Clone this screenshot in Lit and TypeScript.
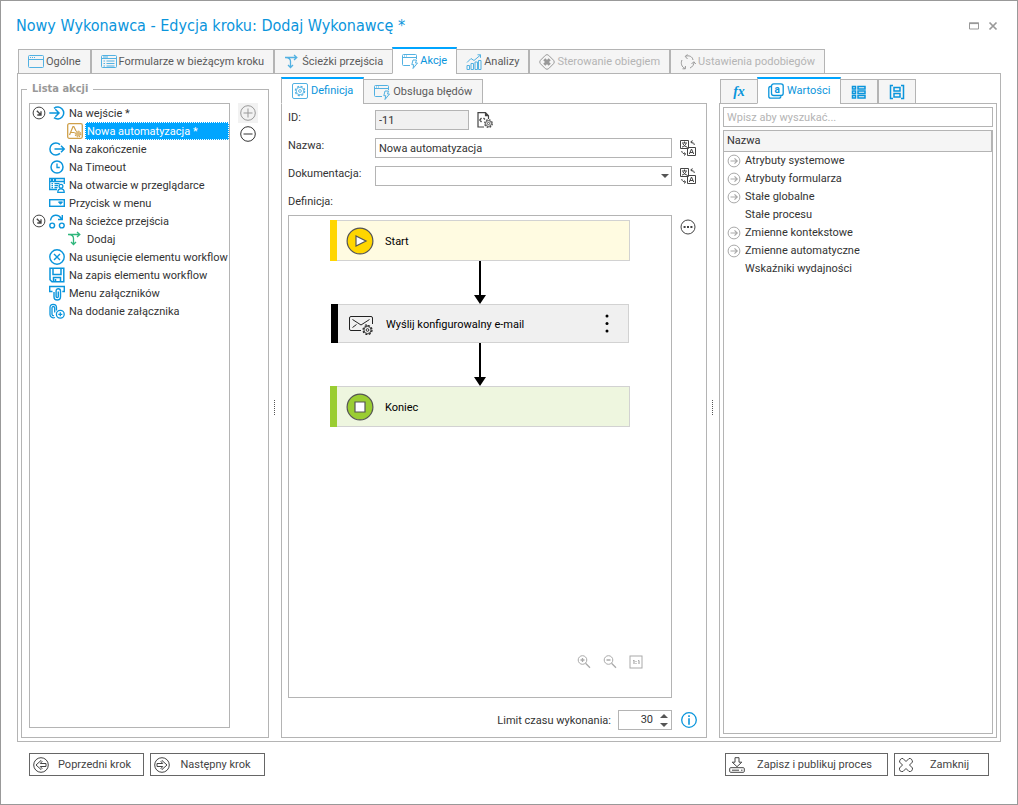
import { LitElement, html, css, svg, nothing, TemplateResult } from "lit";
import { customElement, state } from "lit/decorators.js";
import { classMap } from "lit/directives/class-map.js";

/* ---------- icon set (16 x 16 grid, stroke = currentColor) ---------- */

const gear = (cx: number, cy: number, r: number) => svg`
  <circle cx=${cx} cy=${cy} r=${r} stroke-dasharray=${`${r * 0.45} ${r * 0.335}`} stroke-width="1.2"/>
  <circle cx=${cx} cy=${cy} r=${r - 0.9} stroke-width=".9"/>
  <circle cx=${cx} cy=${cy} r=${r * 0.3} stroke-width=".9"/>`;

const icons: Record<string, unknown> = {
  window: svg`<rect x=".5" y="1.5" width="15" height="12" rx="1"/><path d="M.5 5.5h15M2 3.5h1M4 3.5h1M6 3.5h1"/>`,
  form: svg`<rect x=".5" y="1.5" width="15" height="12" rx="1"/><path d="M.5 4.5h15M2 3h5M2.5 7h1.5M5.5 7h8M2.5 9.5h1.5M5.5 9.5h8M2.5 12h1.5M5.5 12h8"/>`,
  path: svg`<path d="M1 3.500h11.500M10 1l2.800 2.500L10 6M2 3.500c3 .3 4.500 1.500 4.500 4v6M4 11l2.500 2.500L9 11" stroke-width="1.300"/>`,
  action: svg`<path d="M8 12.500H1.500q-1 0-1-1v-9q0-1 1-1h12q1 0 1 1V6M.5 4.500h14M2 3h1M4 3h1"/><path d="M11 7h3.500l-1 3h2l-4.500 5.500.8-3.800h-2z"/>`,
  chart: svg`<path d="M1 15.500v-4h2.500v4zM5 15.500v-6h2.500v6zM9 15.500V8h2.500v7.500zM12.500 15.500V6.500H15v9zM1 8.500l4-4 3 2L14.500 1M11.500.8h3v3"/>`,
  control: svg`<path d="M8 .7q1 0 1.700.7l4.900 4.900q1.400 1.700 0 3.400l-4.900 4.900q-1.700 1.400-3.400 0L1.400 9.700Q0 8 1.400 6.300l4.900-4.900Q7 .7 8 .7z"/><path stroke-width="3" d="M5.300 5.300l5.400 5.400M10.700 5.300l-5.400 5.400"/>`,
  cycle: svg`<path d="M5.500 2.300C9 1 12.500 2.500 13 6M7.500.5l-2.300 1.900L7.500 5M14 8c0 2.500-1.500 5-4 6M15.800 10l-2-2.300L11.500 10M5 14.500C1.500 13 .5 9 2 6M2.500 14.800H5.400V12"/>`,
  settings: svg`<rect x=".5" y=".5" width="15" height="15" rx="1.500"/>${gear(8, 8, 4.7)}`,
  enter: svg`<path d="M5 3.300A6 6 0 1 1 5 12.700M.3 8h9.500M6.300 4.300L10 8l-3.700 3.700" stroke-width="1.500"/>`,
  exit: svg`<path d="M11 3.600A6 6 0 1 0 11 12.400M5.500 8H15M12 4.800L15.200 8 12 11.200" stroke-width="1.500"/>`,
  clock: svg`<circle cx="8" cy="8" r="6" stroke-width="1.500"/><path d="M8 4.500V8.500h2.800" stroke-width="1.300"/>`,
  browser: svg`<path d="M8 12.500H.7v-11h14.600V7M.7 4.500h14.600M2 3h2M5 3h2M2.500 6.700h1.500M5.500 6.700h5M2.500 8.700h1.500M5.500 8.700h3.500M2.500 10.700h1.500M5.500 10.700h3" stroke-width="1.300"/><circle cx="12" cy="9.200" r="1.900" stroke-width="1.300"/><path d="M8.800 15.300c0-4.600 6.400-4.600 6.400 0z" stroke-width="1.300"/>`,
  menuButton: svg`<rect x=".7" y="4.700" width="14.600" height="6.600" stroke-width="1.400"/><path d="M9.500 6.900h4l-2 2.400z" fill="currentColor"/>`,
  transition: svg`<g stroke-width="1.400"><circle cx="3.200" cy="12.500" r="2.400"/><circle cx="12.800" cy="12.500" r="2.400"/><path d="M1.500 7.500C2.500 1 9.500.5 12.500 6M13.300 2v4.500H9"/></g>`,
  remove: svg`<g stroke-width="1.400"><circle cx="8" cy="8" r="7.200"/><path d="M5 5l6 6M11 5l-6 6"/></g>`,
  save: svg`<path d="M1 1.200h13.800v13.600H3L1 12.800zM4 1.200v6.300h8V1.200M4.500 14.500v-4h7v4M6.500 12v2.500" stroke-width="1.500"/>`,
  clipMenu: svg`<path d="M3.500 6.500H.7v-5h14.600v5h-2M5 7v4.800c0 4.300 6.500 4.300 6.500 0V6c0-3-4.400-3-4.400 0v5.500c0 1.500 2.200 1.500 2.200 0V6.500" stroke-width="1.400"/>`,
  clipAdd: svg`<g stroke-width="1.300"><path d="M6 14.500C3.500 15.500 1 14 1 11.500v-7c0-4.300 6.500-4.300 6.500 0V7.500M5.700 9.500V5c0-2-2.700-2-2.700 0v6c0 1.500 1 2 2 1.500"/><circle cx="11.300" cy="11.300" r="3.900"/><path d="M11.300 9.300v4M9.300 11.300h4"/></g>`,
  automation: svg`<rect x=".7" y=".7" width="14.600" height="14.600" rx="1.500" stroke-width="1.300"/><path d="M2.500 12L6 3.500h.8L9 8M3.700 9.500h4" stroke-width="1.200"/>${gear(11, 11, 2.8)}`,
  collapse: svg`<circle cx="8" cy="8" r="5.900"/><path d="M5.800 5.800l4 4M10 6.300V10H6.300" stroke-width="1.300"/>`,
  expand: svg`<circle cx="8" cy="8" r="5.900"/><path d="M4.500 8h6.500M8.500 5.300L11.200 8l-2.700 2.700" stroke-width="1.200"/>`,
  plus: svg`<circle cx="8" cy="8" r="7.300"/><path d="M8 3.500v9M3.500 8h9"/>`,
  minus: svg`<circle cx="8" cy="8" r="7.300"/><path d="M3.500 8h9"/>`,
  more: svg`<circle cx="8" cy="8" r="7"/><path stroke-width="2" d="M3.600 8h2M7 8h2M10.400 8h2"/>`,
  docGear: svg`<path d="M7 15H1V.7h7.500l3 3V7M8.500.7v3h3M4.500 6L2.800 8l1.700 2M6.500 6l1.500 1.500" stroke-width="1.200"/>${gear(11.500, 11.500, 3.800)}`,
  translate: svg`<path d="M.5.5h8v8h-8zM7.500 7.500h8v8h-8zM2 3h5M4.500 1.500V3M6 3.500C5.500 5.500 3.500 6.800 2 7M3 3.800C4 6 5.500 6.700 7 7M9.300 14l2.200-5 2.200 5M10 12.500h3M11 2c2 0 3 1 3.300 3M12.500.5L10.700 2l1.800 1.500M5.500 14C3.500 14 2 13 1.700 11M4 15.500L5.700 14 4 12.500"/>`,
  info: svg`<circle cx="8" cy="8" r="7.300" stroke-width="1.300"/><path stroke-width="1.600" d="M8 3.300v1.600M8 6.300v6.400"/>`,
  zoomIn: svg`<circle cx="6.500" cy="6" r="4.300"/><path d="M9.500 9.200l4.500 4.500M4.500 6h4M6.500 4v4" stroke-width="1.300"/>`,
  zoomOut: svg`<circle cx="6.500" cy="6" r="4.300"/><path d="M9.500 9.200l4.500 4.500M4.500 6h4" stroke-width="1.300"/>`,
  actual: svg`<rect x="2" y="2" width="12" height="12"/><path d="M5 6.500h1v3.500M11 6.500v3.500M10 6.500h1M8 7v1M8 9v1" stroke-width="1.200"/>`,
  prev: svg`<circle cx="8" cy="8" r="7.300"/><path d="M8 3.500L3 8l5 4.500 1-1L7.300 9.500H13v-3H7.300L9 4.500z"/>`,
  next: svg`<circle cx="8" cy="8" r="7.300"/><path d="M8 3.500L13 8l-5 4.500-1-1L8.700 9.500H3v-3h5.700L7 4.500z"/>`,
  publish: svg`<path d="M6 .7h4v4.500h2.800L8 9.700 3.200 5.200H6z"/><rect x=".7" y="10.700" width="14.600" height="4.600" rx="1"/><path d="M3 13.200h7M12 13.200h1.500"/>`,
  cross: svg`<path d="M5 1.500L8 4.500l3-3q3-.5 3.500 3.500L11.500 8l3 3q0 4-3.500 3.500l-3-3-3 3Q1 15 1.500 11l3-3-3-3Q2 1 5 1.500z" stroke-linejoin="round"/>`,
  values: svg`<path d="M3.500 3.500H2.500Q.8 3.500.8 5.500v8q0 1.700 2 1.700h8q2 0 2-2" stroke-width="1.300"/><rect x="3.500" y=".8" width="11.700" height="11.700" rx="2.200" stroke-width="1.300"/><text x="9.300" y="10" text-anchor="middle" font-size="10" font-weight="bold" fill="currentColor" stroke="none">a</text>`,
  list: svg`<path d="M1.500 2.500h3v2.500h-3zM1.500 7h3v2.500h-3zM1.500 11.500h3V14h-3zM7 2.500h7v2.500H7zM7 7h7v2.500H7zM7 11.500h7V14H7z" stroke-width="1.500"/>`,
  brackets: svg`<path d="M4 1.500H1.500v13H4M12 1.500h2.500v13H12M5 3.500h6V7H5zM5 9.500h6v3.500H5z" stroke-width="1.500"/>`,
  maximize: svg`<path d="M3.500 5h9v6h-9z"/><path d="M3 5.300h10" stroke-width="1.600"/>`,
  close: svg`<path d="M4.500 4.500l7 7M11.500 4.500l-7 7" stroke-width="1.700"/>`,
};

const icon = (name: string, tone = "") => html`
  <svg class="icon ${tone}" viewBox="0 0 16 16" fill="none" stroke="currentColor" aria-hidden="true">${icons[name]}</svg>`;

/* ---------- data ---------- */

interface Tab { label: string; icon: string; disabled?: boolean }
interface ActionRow { label: string; icon: string; open?: boolean; child?: boolean; tone?: string }

const MAIN_TABS: Tab[] = [
  { label: "Ogólne", icon: "window" },
  { label: "Formularze w bieżącym kroku", icon: "form" },
  { label: "Ścieżki przejścia", icon: "path" },
  { label: "Akcje", icon: "action" },
  { label: "Analizy", icon: "chart" },
  { label: "Sterowanie obiegiem", icon: "control", disabled: true },
  { label: "Ustawienia podobiegów", icon: "cycle", disabled: true },
];

const ACTIONS: ActionRow[] = [
  { label: "Na wejście *", icon: "enter", open: true },
  { label: "Nowa automatyzacja *", icon: "automation", child: true, tone: "gold" },
  { label: "Na zakończenie", icon: "exit" },
  { label: "Na Timeout", icon: "clock" },
  { label: "Na otwarcie w przeglądarce", icon: "browser" },
  { label: "Przycisk w menu", icon: "menuButton" },
  { label: "Na ścieżce przejścia", icon: "transition", open: true },
  { label: "Dodaj", icon: "path", child: true, tone: "green" },
  { label: "Na usunięcie elementu workflow", icon: "remove" },
  { label: "Na zapis elementu workflow", icon: "save" },
  { label: "Menu załączników", icon: "clipMenu" },
  { label: "Na dodanie załącznika", icon: "clipAdd" },
];

const VALUES: { label: string; group: boolean }[] = [
  { label: "Atrybuty systemowe", group: true },
  { label: "Atrybuty formularza", group: true },
  { label: "Stałe globalne", group: true },
  { label: "Stałe procesu", group: false },
  { label: "Zmienne kontekstowe", group: true },
  { label: "Zmienne automatyczne", group: true },
  { label: "Wskaźniki wydajności", group: false },
];

/* ---------- shared styles ---------- */

const base = css`
  * { box-sizing: border-box; }
  button, input, select { font: inherit; color: inherit; margin: 0; border-radius: 0; outline: none; }
  button { background: none; border: 0; padding: 0; cursor: pointer; white-space: nowrap; }
  .icon { width: 16px; height: 16px; flex: none; display: block; overflow: visible; }
  .blue { color: #0a95dc; }
  .gold { color: #cfa04a; }
  .green { color: #2fb67c; }
  .dark { color: #444; }
  .pale { color: #aaa; }

  .tabs { display: flex; align-items: flex-end; height: 27px; padding-left: 1px; margin-bottom: -1px; position: relative; }
  .tab {
    display: flex; align-items: center; gap: 3px; height: 25px; padding: 0 10px;
    background: #f5f5f5; border: 1px solid #b4b4b4; color: #5a5a5a; margin-right: -1px;
  }
  .tab + .tab { margin-left: 1px; }
  .tab .icon { color: #52b1e2; }
  .tab.solid .icon { color: #0a95dc; }
  .tab.active {
    height: 27px; background: #fff; color: #0a95dc; border-top: 2px solid #00a5ff; border-bottom-color: #fff; margin-left: 0;
  }
  .tab.active + .tab { margin-left: 0; }
  .tab:disabled { color: #b4b4b4; cursor: default; }
  .tab:disabled .icon { color: #999; }
`;

/* ---------- action tree ---------- */

@customElement("action-list")
export class ActionList extends LitElement {
  @state() private selected = 1;

  static styles = [base, css`
    :host { display: flex; min-height: 0; }
    .group {
      flex: 1; min-width: 0; display: flex; flex-direction: column; margin: 0; padding: 0 10px 9px 7px;
      border: 1px solid #b4b4b4;
    }
    .legend { font: bold 11px/14px "DejaVu Sans Condensed", sans-serif; color: #999; padding: 0 5px; margin-left: -2px; }
    .body { display: flex; flex: 1; gap: 8px; height: 100%; padding-top: 7px; }
    .tree { flex: 1; min-width: 0; margin: 0; padding: 0; list-style: none; border: 1px solid #b4b4b4; }
    .row { display: flex; align-items: center; height: 18px; padding-left: 1px; }
    .toggle, .spacer { width: 18px; flex: none; }
    .child .spacer { width: 36px; }
    .label { flex: none; height: 18px; line-height: 16px; padding: 2px 2px 0; margin-left: 2px; text-align: left; }
    .selected .label { flex: 1; background: #00a5ff; color: #fff; border: 1px dotted #fff; padding: 1px 1px 0; }
    .tools { display: flex; flex-direction: column; gap: 1px; }
    .tool { width: 20px; height: 20px; display: grid; place-items: center; }
    .tool.off { background: #f2f2f2; color: #999; }
  `];

  render() {
    return html`
      <fieldset class="group">
        <legend class="legend">Lista akcji</legend>
        <div class="body">
          <ul class="tree">
            ${ACTIONS.map((a, i) => html`
              <li class=${classMap({ row: true, child: !!a.child, selected: i === this.selected })}>
                ${a.open
                  ? html`<button class="toggle" aria-label="Zwiń">${icon("collapse", "dark")}</button>`
                  : html`<span class="spacer"></span>`}
                ${icon(a.icon, a.tone ?? "blue")}
                <button class="label" @click=${() => (this.selected = i)}>${a.label}</button>
              </li>`)}
          </ul>
          <div class="tools">
            <button class="tool off" aria-label="Dodaj">${icon("plus")}</button>
            <button class="tool" aria-label="Usuń">${icon("minus")}</button>
          </div>
        </div>
      </fieldset>`;
  }
}

/* ---------- definition editor ---------- */

@customElement("automation-editor")
export class AutomationEditor extends LitElement {
  static styles = [base, css`
    :host { display: flex; flex-direction: column; min-height: 0; min-width: 0; }
    .tabs { padding-left: 0; }
    .panel { flex: 1; min-height: 0; display: flex; flex-direction: column; border: 1px solid #b4b4b4; padding: 6px 9px 7px 6px; }
    .form { display: grid; grid-template-columns: 87px 1fr 25px; row-gap: 8px; }
    .caption { line-height: 16px; }
    .field { width: 100%; height: 20px; border: 1px solid #b4b4b4; padding: 0 3px; background: #fff; }
    .field.id { width: 94px; background: #f0f0f0; }
    .inline { display: flex; align-items: center; gap: 8px; }
    .combo { display: grid; align-items: center; }
    .combo > * { grid-area: 1 / 1; }
    .combo .field { appearance: none; }
    .arrow { width: 8px; height: 4px; justify-self: end; margin-right: 3px; fill: #555; pointer-events: none; }
    .side { margin-left: 8px; align-self: center; justify-self: start; }
    .title { line-height: 16px; margin-top: 8px; }
    .stage { flex: 1; min-height: 0; display: grid; grid-template-columns: 1fr 25px; margin-top: 5px; }
    .canvas { position: relative; border: 1px solid #b4b4b4; display: flex; flex-direction: column; align-items: center; padding-top: 4px; color: #000; }
    .more { margin: 4px 0 0 8px; align-self: start; justify-self: start; }
    .node { display: flex; align-items: center; width: 300px; height: 41px; border: 1px solid #d2d2d2; border-left: 0; padding-right: 16px; }
    .node::before { content: ""; width: 7px; flex: none; align-self: stretch; margin: -1px 9px -1px 0; background: #000; }
    .node.start { background: #fffbe1; }
    .node.start::before { background: #ffd600; }
    .node.end { background: #eef6df; }
    .node.end::before { background: #9acd32; }
    .node.task { width: 298px; height: 39px; background: #f0f0f0; }
    .glyph { width: 28px; height: 28px; flex: none; margin-right: 11px; }
    .name { flex: 1; padding-top: 2px; }
    .kebab { width: 10px; height: 24px; }
    .kebab svg { display: block; width: 10px; height: 24px; }
    .link { width: 12px; height: 43px; flex: none; }
    .zoom { position: absolute; right: 27px; bottom: 27px; display: flex; gap: 10px; }
    .foot { display: flex; align-items: center; justify-content: flex-end; margin-top: 12px; }
    .limit { padding-top: 2px; }
    .spin { display: flex; width: 54px; height: 20px; border: 1px solid #b4b4b4; margin: 0 9px 0 7px; }
    .number { flex: 1; width: 0; border: 0; padding: 0 5px 0 0; text-align: right; appearance: textfield; background: none; }
    .number::-webkit-inner-spin-button { appearance: none; }
    .steps { width: 12px; display: flex; flex-direction: column; justify-content: space-around; margin-right: 1px; }
    .step { height: 8px; display: grid; place-items: center; }
    .step svg { width: 8px; height: 4px; fill: #555; display: block; }
  `];

  private link() {
    return html`<svg class="link" viewBox="0 0 12 43" aria-hidden="true">
      <path d="M5 0h2v34h5L6 43 0 34h5z"/></svg>`;
  }

  render() {
    return html`
      <div class="tabs">
        <button class="tab active">${icon("settings")}<span>Definicja</span></button>
        <button class="tab">${icon("action")}<span>Obsługa błędów</span></button>
      </div>
      <div class="panel">
        <div class="form">
          <label class="caption" for="id">ID:</label>
          <div class="inline">
            <input class="field id" id="id" value="-11" readonly />
            <button aria-label="Szczegóły">${icon("docGear", "dark")}</button>
          </div>
          <span></span>
          <label class="caption" for="name">Nazwa:</label>
          <input class="field" id="name" value="Nowa automatyzacja" />
          <button class="side" aria-label="Tłumaczenia nazwy">${icon("translate", "dark")}</button>
          <label class="caption" for="doc">Dokumentacja:</label>
          <div class="combo">
            <select class="field" id="doc"><option></option></select>
            <svg class="arrow" viewBox="0 0 8 4" aria-hidden="true"><path d="M0 0h8L4 4z"/></svg>
          </div>
          <button class="side" aria-label="Tłumaczenia dokumentacji">${icon("translate", "dark")}</button>
        </div>
        <div class="title">Definicja:</div>
        <div class="stage">
          <div class="canvas">
            <div class="node start">
              <svg class="glyph" viewBox="0 0 28 28" aria-hidden="true">
                <circle cx="14" cy="14" r="12.900" fill="#ffd600" stroke="#555" stroke-width="1.200"/>
                <path d="M10 9v10l10-5z" fill="#fff" stroke="#555" stroke-width="1.200"/>
              </svg>
              <span class="name">Start</span>
            </div>
            ${this.link()}
            <div class="node task">
              <svg class="glyph" viewBox="0 0 28 28" fill="none" stroke="#222" aria-hidden="true">
                <path d="M14 20.500H4q-1.500 0-1.500-1.500V8Q2.500 6.500 4 6.500h20q1.500 0 1.500 1.500v6M5.500 9.500l8.500 5.500 8.500-5.500M5.500 17.500l4-3M18.500 14.500l2 1"/>
                ${gear(20.500, 20, 4.500)}
              </svg>
              <span class="name">Wyślij konfigurowalny e-mail</span>
              <button class="kebab" aria-label="Menu akcji">
                <svg viewBox="0 0 10 24"><circle cx="5" cy="4" r="1.500"/><circle cx="5" cy="11.500" r="1.500"/><circle cx="5" cy="19" r="1.500"/></svg>
              </button>
            </div>
            ${this.link()}
            <div class="node end">
              <svg class="glyph" viewBox="0 0 28 28" aria-hidden="true">
                <circle cx="14" cy="14" r="12.900" fill="#9acd32" stroke="#555" stroke-width="1.200"/>
                <path d="M9 9h10v10H9z" fill="#fff" stroke="#555" stroke-width="1.200"/>
              </svg>
              <span class="name">Koniec</span>
            </div>
            <div class="zoom">
              <button aria-label="Powiększ">${icon("zoomIn", "pale")}</button>
              <button aria-label="Pomniejsz">${icon("zoomOut", "pale")}</button>
              <button aria-label="Rozmiar rzeczywisty">${icon("actual", "pale")}</button>
            </div>
          </div>
          <button class="more" aria-label="Więcej">${icon("more", "dark")}</button>
        </div>
        <div class="foot">
          <label class="limit" for="limit">Limit czasu wykonania:</label>
          <div class="spin">
            <input class="number" id="limit" type="number" value="30" />
            <div class="steps">
              <button class="step" aria-label="Zwiększ"><svg viewBox="0 0 8 4"><path d="M0 4h8L4 0z"/></svg></button>
              <button class="step" aria-label="Zmniejsz"><svg viewBox="0 0 8 4"><path d="M0 0h8L4 4z"/></svg></button>
            </div>
          </div>
          <button aria-label="Informacja">${icon("info", "blue")}</button>
        </div>
      </div>`;
  }
}

/* ---------- value picker ---------- */

@customElement("value-picker")
export class ValuePicker extends LitElement {
  static styles = [base, css`
    :host { display: flex; flex-direction: column; min-height: 0; }
    .fx { width: 16px; text-align: center; font: italic bold 14px/16px "Liberation Serif", serif; color: #0a95dc; }
    .panel { flex: 1; min-height: 0; display: flex; flex-direction: column; gap: 3px; border: 1px solid #b4b4b4; padding: 3px; }
    .search { width: 100%; height: 20px; border: 1px solid #b4b4b4; padding: 0 3px; }
    .search::placeholder { color: #b4b4b4; opacity: 1; }
    .grid { flex: 1; border: 1px solid #b4b4b4; }
    .table { width: 100%; border-spacing: 0; }
    .head { height: 21px; padding: 0 3px; text-align: left; font-weight: normal; background: #f5f5f5; border-right: 1px solid #b4b4b4; border-bottom: 1px solid #b4b4b4; }
    .cell { height: 18px; padding: 0; }
    .item { display: flex; align-items: center; gap: 3px; padding-left: 2px; height: 18px; }
    .blank { width: 16px; }
  `];

  render() {
    const tab = (content: TemplateResult, label: string) => html`<button class="tab solid" aria-label=${label}>${content}</button>`;
    return html`
      <div class="tabs">
        ${tab(html`<span class="fx">fx</span>`, "Funkcje")}
        <button class="tab solid active">${icon("values")}<span>Wartości</span></button>
        ${tab(html`${icon("list")}`, "Lista")}
        ${tab(html`${icon("brackets")}`, "Obiekty")}
      </div>
      <div class="panel">
        <input class="search" type="text" aria-label="Wyszukaj" placeholder="Wpisz aby wyszukać..." />
        <div class="grid">
          <table class="table">
            <thead><tr><th class="head">Nazwa</th></tr></thead>
            <tbody>
              ${VALUES.map((v) => html`
                <tr><td class="cell"><div class="item">
                  ${v.group
                    ? html`<button aria-label="Rozwiń">${icon("expand", "pale")}</button>`
                    : html`<span class="blank"></span>`}
                  <span>${v.label}</span>
                </div></td></tr>`)}
            </tbody>
          </table>
        </div>
      </div>`;
  }
}

/* ---------- window ---------- */

@customElement("app-root")
export class AppRoot extends LitElement {
  @state() private current = 3;

  static styles = [base, css`
    :host {
      display: flex; flex-direction: column; box-sizing: border-box; height: 100vh;
      border: 1px solid #999; padding: 0 16px; background: #fff; color: #333;
      font: 11px/14px Roboto, "Noto Sans", sans-serif;
    }
    .bar { display: flex; align-items: center; justify-content: space-between; height: 46px; flex: none; padding-top: 3px; }
    .heading { margin: 0 0 0 -1px; font: normal 16px/20px "DejaVu Sans Condensed", sans-serif; color: #0a95dc; }
    .controls { display: flex; gap: 3px; color: #999; }
    .main .tab { padding: 0 9px; gap: 2px; }
    .content {
      flex: 1; min-height: 0; border: 1px solid #b4b4b4; padding: 3px;
      display: grid; grid-template-rows: 1fr; grid-template-columns: 248px 12px minmax(0, 1fr) 12px 278px;
    }
    .list { padding-top: 5px; }
    .split { align-self: center; margin-left: 5px; width: 1px; height: 15px; background: repeating-linear-gradient(#555 0 1px, transparent 1px 2px); }
    .footer { display: flex; gap: 6px; flex: none; padding: 11px 12px 28px; }
    .gap { flex: 1; }
    .cmd { display: flex; align-items: center; width: 115px; height: 23px; padding: 0 3px; border: 1px solid #666; background: #fff; color: #444; }
    .cmd.wide { width: 163px; }
    .cmd.small { width: 95px; }
    .text { flex: 1; text-align: center; }
  `];

  private command(name: string, label: string, size = "") {
    return html`<button class="cmd ${size}">${icon(name)}<span class="text">${label}</span></button>`;
  }

  render() {
    return html`
      <header class="bar">
        <h1 class="heading">Nowy Wykonawca - Edycja kroku: Dodaj Wykonawcę *</h1>
        <div class="controls">
          <button aria-label="Maksymalizuj">${icon("maximize")}</button>
          <button aria-label="Zamknij okno">${icon("close")}</button>
        </div>
      </header>
      <nav class="tabs main">
        ${MAIN_TABS.map((t, i) => html`
          <button class=${classMap({ tab: true, active: i === this.current })}
            ?disabled=${t.disabled ?? nothing} @click=${() => (this.current = i)}>
            ${icon(t.icon)}<span>${t.label}</span>
          </button>`)}
      </nav>
      <main class="content">
        <action-list class="list"></action-list>
        <div class="split"></div>
        <automation-editor></automation-editor>
        <div class="split"></div>
        <value-picker></value-picker>
      </main>
      <footer class="footer">
        ${this.command("prev", "Poprzedni krok")}
        ${this.command("next", "Następny krok")}
        <span class="gap"></span>
        ${this.command("publish", "Zapisz i publikuj proces", "wide")}
        ${this.command("cross", "Zamknij", "small")}
      </footer>`;
  }
}
